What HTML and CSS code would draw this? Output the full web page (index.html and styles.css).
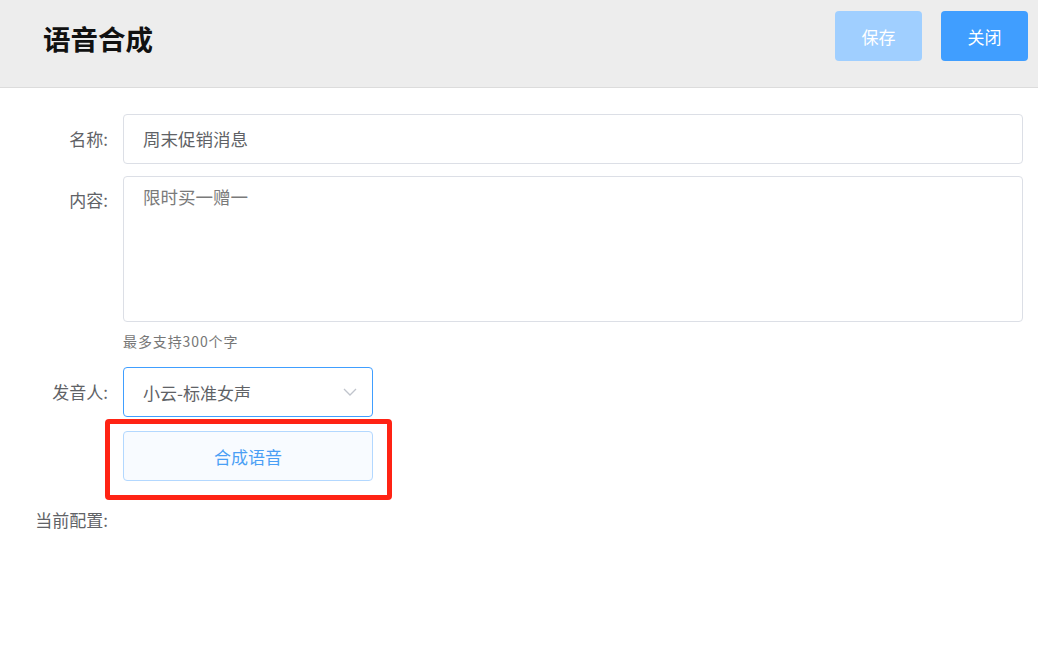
FILE: index.html
```html
<!DOCTYPE html>
<html lang="zh-CN">
<head>
<meta charset="utf-8">
<title>语音合成</title>
<link rel="stylesheet" href="styles.css">
</head>
<body>
<header class="topbar">
  <h1 class="title">语音合成</h1>
  <div class="actions">
    <button class="btn btn-disabled">保存</button>
    <button class="btn btn-primary">关闭</button>
  </div>
</header>
<main class="form">
  <div class="row">
    <label class="label">名称:</label>
    <div class="field">
      <div class="input">周末促销消息</div>
    </div>
  </div>
  <div class="row row-area">
    <label class="label">内容:</label>
    <div class="field">
      <div class="textarea">限时买一赠一</div>
      <div class="hint">最多支持300个字</div>
    </div>
  </div>
  <div class="row row-select">
    <label class="label">发音人:</label>
    <div class="field">
      <div class="select">
        <span>小云-标准女声</span>
        <svg class="chev" width="14" height="8" viewBox="0 0 14 8"><path d="M1 1 L7 7 L13 1" fill="none" stroke="#c0c4cc" stroke-width="1.3"/></svg>
      </div>
    </div>
  </div>
  <div class="row row-btn">
    <div class="label"></div>
    <div class="field">
      <div class="highlight">
        <button class="btn-plain">合成语音</button>
      </div>
    </div>
  </div>
  <div class="row row-config">
    <label class="label">当前配置:</label>
  </div>
</main>
</body>
</html>
```
FILE: styles.css
```css
* { box-sizing: border-box; }
body {
  margin: 0;
  background: #fff;
  font-family: "Noto Sans CJK SC", "Noto Sans", "Liberation Sans", sans-serif;
  color: #606266;
}
.topbar {
  height: 88px;
  background: #ededed;
  border-bottom: 1px solid #dcdcdc;
  display: flex;
  align-items: flex-start;
  justify-content: space-between;
  padding: 0 10px 0 43px;
}
.title {
  margin: 0;
  font-size: 27.5px;
  font-weight: 700;
  color: #111;
  line-height: 76px;
}
.actions {
  display: flex;
  gap: 19px;
  padding-top: 11px;
}
.btn {
  width: 87px;
  height: 50px;
  border: none;
  border-radius: 4px;
  color: #fff;
  font-family: inherit;
  font-size: 17px;
}
.btn-disabled { background: #a0cfff; }
.btn-primary { background: #409eff; }
.form {
  padding-top: 26px;
  padding-right: 15px;
}
.row {
  display: flex;
  align-items: flex-start;
}
.label {
  width: 123px;
  flex: none;
  padding-right: 15px;
  text-align: right;
  font-size: 17px;
  line-height: 50px;
  color: #606266;
}
.field { flex: 1; }
.input {
  height: 50px;
  border: 1px solid #dcdfe6;
  border-radius: 4px;
  padding: 0 19px;
  font-size: 17.5px;
  line-height: 48px;
  color: #606266;
}
.row-area { margin-top: 12px; }
.row-area .label { line-height: 48px; }
.textarea {
  height: 146px;
  border: 1px solid #dcdfe6;
  border-radius: 4px;
  padding: 6px 19px;
  font-size: 17.5px;
  line-height: 28px;
  color: #7a7a7a;
}
.hint {
  font-size: 14px;
  letter-spacing: 0.9px;
  color: #777;
  line-height: 18px;
  margin-top: 10px;
}
.row-select { margin-top: 17px; }
.select {
  width: 250px;
  height: 50px;
  border: 1px solid #409eff;
  border-radius: 4px;
  padding: 0 14px 0 19px;
  display: flex;
  align-items: center;
  justify-content: space-between;
  font-size: 17px;
  color: #606266;
}
.chev { margin-right: 1px; }
.row-btn { margin-top: 14px; }
.row-btn .label { line-height: 1px; }
.highlight {
  position: relative;
  width: 250px;
}
.highlight::after {
  content: "";
  position: absolute;
  left: -18px;
  right: -19px;
  top: -12px;
  bottom: -19px;
  border: 5px solid #ff2314;
  border-radius: 4px;
}
.btn-plain {
  display: block;
  width: 250px;
  height: 50px;
  background: #f8fbff;
  border: 1px solid #b3d8ff;
  border-radius: 4px;
  color: #4a9ff5;
  font-family: inherit;
  font-size: 17px;
}
.row-config { margin-top: 14px; }
.row-config .label { line-height: 50px; }
```
